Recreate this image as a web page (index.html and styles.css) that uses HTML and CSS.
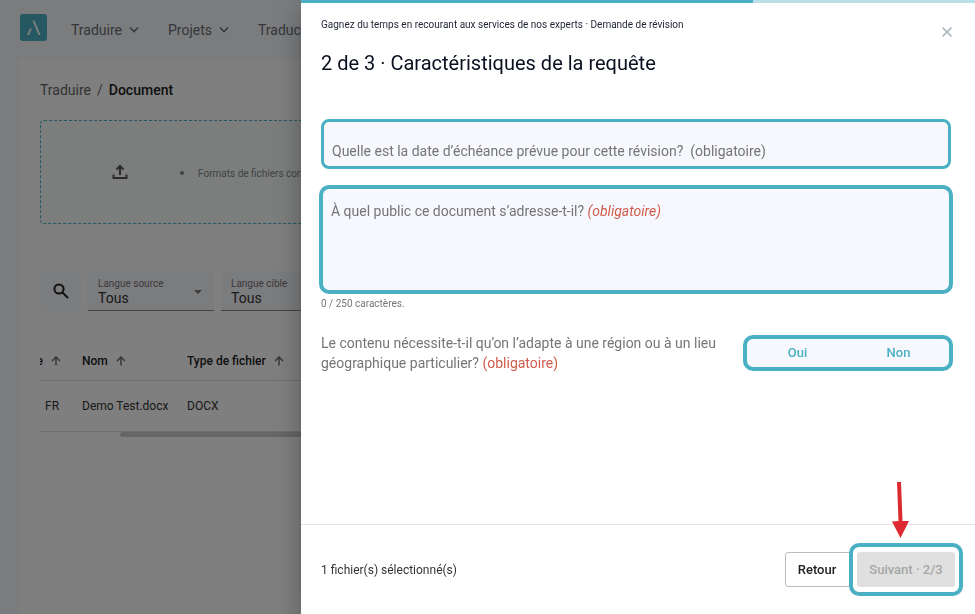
FILE: index.html
```html
<!DOCTYPE html>
<html lang="fr">
<head>
    <meta charset="UTF-8">
    <meta name="viewport" content="width=device-width, initial-scale=1.0">
    <title>Demande de révision</title>
    <link rel="stylesheet" href="styles.css">
</head>
<body>

    <header class="topbar">
        <svg class="logo" viewBox="0 0 27 27" aria-hidden="true">
            <rect width="27" height="27" rx="3" fill="#4bb0c3" stroke="none"/>
            <path d="M12.500 6.500H14.500L20.500 21H18.500ZM10 14.500H12L9 21H7Z" fill="#fff" stroke="none"/>
        </svg>
        <nav class="menu">
            <a href="#">Traduire
                <svg class="chevron" viewBox="0 0 10 10"><path d="M1 2.500L5 6.500L9 2.500"/></svg>
            </a>
            <a href="#">Projets
                <svg class="chevron" viewBox="0 0 10 10"><path d="M1 2.500L5 6.500L9 2.500"/></svg>
            </a>
            <a href="#">Traduction</a>
        </nav>
    </header>

    <main class="content">
        <div class="breadcrumb"><a href="#">Traduire</a><span>/</span><strong>Document</strong></div>

        <div class="dropzone">
            <svg class="upload" viewBox="0 0 16 16"><path d="M8 11V2.500M4.500 5.500L8 2L11.500 5.500M1.500 10.500V14H14.500V10.500"/></svg>
            <ul>
                <li>Formats de fichiers compatibles</li>
            </ul>
        </div>

        <div class="filters">
            <button class="search" aria-label="Rechercher">
                <svg viewBox="0 0 18 18"><circle cx="7" cy="7" r="4.600"/><path d="M10.500 10.500L16 16"/></svg>
            </button>
            <div class="filter">
                <label for="source">Langue source</label>
                <select id="source"><option>Tous</option></select>
                <svg class="caret" viewBox="0 0 8 4"><path d="M0 0H8L4 4Z"/></svg>
            </div>
            <div class="filter">
                <label for="target">Langue cible</label>
                <select id="target"><option>Tous</option></select>
                <svg class="caret" viewBox="0 0 8 4"><path d="M0 0H8L4 4Z"/></svg>
            </div>
        </div>

        <table class="files">
            <thead>
                <tr>
                    <th><div class="sort sort-cut">Cible <svg viewBox="0 0 10 10"><path d="M5 9.500V1M1 5L5 1L9 5"/></svg></div></th>
                    <th><div class="sort">Nom <svg viewBox="0 0 10 10"><path d="M5 9.500V1M1 5L5 1L9 5"/></svg></div></th>
                    <th><div class="sort">Type de fichier <svg viewBox="0 0 10 10"><path d="M5 9.500V1M1 5L5 1L9 5"/></svg></div></th>
                </tr>
            </thead>
            <tbody>
                <tr>
                    <td>FR</td>
                    <td>Demo Test.docx</td>
                    <td>DOCX</td>
                </tr>
            </tbody>
        </table>
        <div class="scrollbar"></div>
    </main>

    <div class="backdrop"></div>

    <section class="drawer" role="dialog" aria-labelledby="drawer-title">
        <div class="progress"><div class="progress-bar" style="width: 67%"></div></div>

        <div class="drawer-header">
            <div>
                <p class="subtitle">Gagnez du temps en recourant aux services de nos experts · Demande de révision</p>
                <h1 id="drawer-title">2 de 3 · Caractéristiques de la requête</h1>
            </div>
            <button class="close" aria-label="Fermer">
                <svg viewBox="0 0 10 10"><path d="M.5 .5L9.500 9.500M9.500 .5L.5 9.500"/></svg>
            </button>
        </div>

        <form class="drawer-body">
            <div class="field field-date">
                <label for="due">Quelle est la date d’échéance prévue pour cette révision?&nbsp; (obligatoire)</label>
                <input type="text" id="due">
            </div>

            <div class="field field-text">
                <label for="audience">À quel public ce document s’adresse-t-il? <em class="required">(obligatoire)</em></label>
                <textarea id="audience" maxlength="250"></textarea>
            </div>
            <p class="counter">0 / 250 caractères.</p>

            <div class="question">
                <p id="region-label">Le contenu nécessite-t-il qu’on l’adapte à une région ou à un lieu géographique particulier? <span class="required">(obligatoire)</span></p>
                <div class="toggle" role="radiogroup" aria-labelledby="region-label">
                    <input type="radio" name="region" id="yes"><label for="yes">Oui</label>
                    <input type="radio" name="region" id="no"><label for="no">Non</label>
                </div>
            </div>
        </form>

        <footer class="drawer-footer">
            <span class="selected">1 fichier(s) sélectionné(s)</span>
            <button class="btn btn-back">Retour</button>
            <div class="highlight">
                <svg class="arrow" viewBox="0 0 18 58"><path d="M6 1L10 1L11.500 40H18L9.500 57L1 40.500L7.500 40Z" fill="#dc2a30"/></svg>
                <button class="btn btn-next" disabled>Suivant · 2/3</button>
            </div>
        </footer>
    </section>

</body>
</html>
```
FILE: styles.css
```css
* {
    box-sizing: border-box;
}
body {
    margin: 0;
    height: 100vh;
    overflow: hidden;
    display: flex;
    flex-direction: column;
    font-family: Roboto, 'Liberation Sans', sans-serif;
    font-size: 14px;
    color: #333;
    background: #f6f8fd;
}
p, h1, ul {
    margin: 0;
    padding: 0;
}
a {
    color: inherit;
    text-decoration: none;
}
button, input, select, textarea {
    font: inherit;
    color: inherit;
}
svg {
    display: block;
    fill: none;
    stroke: currentColor;
    flex-shrink: 0;
}

/* page behind the drawer */
.topbar {
    display: flex;
    align-items: center;
    gap: 24px;
    height: 60px;
    padding: 0 20px 6px;
    flex-shrink: 0;
}
.logo {
    width: 27px;
    height: 27px;
}
.menu {
    display: flex;
    gap: 29px;
    padding-top: 6px;
    color: #6a6e73;
}
.menu a {
    display: flex;
    align-items: center;
    gap: 7px;
}
.chevron {
    width: 10px;
    height: 10px;
    stroke-width: 1.6;
}
.content {
    flex: 1;
    margin-left: 20px;
    padding: 20px;
    background: #fff;
    border-radius: 4px 0 0 0;
}
.breadcrumb {
    display: flex;
    gap: 6px;
    line-height: 20px;
    color: #666;
}
.breadcrumb strong {
    font-weight: 500;
    color: #222;
}
.dropzone {
    display: flex;
    align-items: center;
    gap: 70px;
    height: 104px;
    margin-top: 20px;
    padding-left: 71px;
    border: 1px dashed #4bb0c3;
    border-radius: 4px;
    background: #f8fdfb;
}
.upload {
    width: 16px;
    height: 16px;
    stroke: #555;
    stroke-width: 2;
}
.dropzone ul {
    padding-top: 2px;
    list-style: none;
}
.dropzone li {
    display: flex;
    align-items: center;
    gap: 14px;
    margin-left: -18px;
    font-size: 10px;
    color: #80858a;
}
.dropzone li::before {
    content: "";
    width: 4px;
    height: 4px;
    border-radius: 50%;
    background: #80858a;
}
.filters {
    display: flex;
    gap: 7px;
    margin-top: 47px;
}
.search {
    display: flex;
    align-items: center;
    justify-content: center;
    width: 41px;
    height: 40px;
    border: none;
    border-radius: 3px;
    background: #f6f8fd;
    color: #222;
}
.search svg {
    width: 18px;
    height: 18px;
    stroke-width: 2;
}
.filter {
    display: grid;
    grid-template-columns: 1fr 8px;
    align-content: end;
    align-items: center;
    width: 126px;
    height: 40px;
    padding: 0 12px 4px 10px;
    border-bottom: 1px solid #888;
    border-radius: 3px 3px 0 0;
    background: #f6f8fd;
}
.filter label {
    grid-column: 1;
    font-size: 10px;
    line-height: 12px;
    color: #777;
}
.filter select {
    grid-column: 1;
    width: 100%;
    height: 16px;
    padding: 0;
    border: none;
    background: none;
    appearance: none;
}
.caret {
    grid-column: 2;
    grid-row: 1 / 3;
    width: 8px;
    height: 4px;
    fill: #777;
    stroke: none;
}
.files {
    width: 100%;
    margin-top: 30px;
    border-collapse: collapse;
    table-layout: fixed;
    font-size: 12px;
}
.files th, .files td {
    padding: 0;
    border-bottom: 1px solid #ddd;
    text-align: left;
}
.files th {
    height: 39px;
    padding-top: 2px;
    font-weight: 500;
    color: #222;
}
.files td {
    height: 51px;
}
.files th:nth-child(1) {
    width: 42px;
}
.files td:nth-child(1) {
    padding-left: 5px;
}
.files th:nth-child(2) {
    width: 105px;
}
.sort {
    display: flex;
    align-items: center;
    gap: 8px;
}
.sort-cut {
    width: 21px;
    justify-content: flex-end;
    overflow: hidden;
}
.sort svg {
    width: 10px;
    height: 10px;
    stroke: #666;
    stroke-width: 1.4;
}
.scrollbar {
    height: 5px;
    margin-left: 80px;
    border-radius: 3px;
    background: #ccc;
}
.backdrop {
    position: fixed;
    inset: 0;
    background: rgba(0, 0, 0, 0.5);
}

/* drawer */
.drawer {
    position: fixed;
    top: 0;
    right: 0;
    bottom: 0;
    left: 301px;
    display: flex;
    flex-direction: column;
    background: #fff;
    box-shadow: 0 8px 10px -5px rgba(0, 0, 0, 0.2), 0 16px 24px 2px rgba(0, 0, 0, 0.14), 0 6px 30px 5px rgba(0, 0, 0, 0.12);
}
.progress {
    height: 3px;
    background: #b8e0e6;
}
.progress-bar {
    height: 3px;
    background: #4bb0c3;
}
.drawer-header {
    display: flex;
    justify-content: space-between;
    align-items: flex-start;
    padding: 14px 18px 0 20px;
}
.subtitle {
    font-size: 10px;
    line-height: 16px;
    color: #1d2333;
}
.drawer-header h1 {
    margin-top: 16px;
    font-size: 20px;
    line-height: 28px;
    font-weight: 400;
    color: #0b1020;
}
.close {
    display: flex;
    margin-top: 5px;
    padding: 5px;
    border: none;
    background: none;
    color: #a3b2b6;
}
.close svg {
    width: 10px;
    height: 10px;
    stroke-width: 1.5;
}
.drawer-body {
    flex: 1;
    padding: 42px 22px 0 18px;
    color: #757575;
}
.field {
    position: relative;
    background: #f6f8fd;
    border: 4px solid #4bb0c3;
    border-radius: 10px;
}
.field label {
    position: absolute;
    left: 8px;
    line-height: 20px;
    pointer-events: none;
}
.field input, .field textarea {
    display: block;
    width: 100%;
    border: none;
    outline: none;
    background: none;
    resize: none;
}
.field-date {
    margin: 0 2px;
    border-width: 3px;
    border-radius: 8px;
}
.field-date label {
    bottom: 5px;
}
.field-date input {
    height: 44px;
    padding: 18px 8px 0;
}
.field-text {
    margin-top: 16px;
}
.field-text label {
    top: 12px;
}
.field-text textarea {
    height: 101px;
    padding: 12px 8px;
}
.required {
    color: #cf5c4c;
}
.counter {
    margin: 2px 2px 0;
    font-size: 10px;
    line-height: 16px;
}
.question {
    display: flex;
    align-items: center;
    justify-content: space-between;
    margin-top: 21px;
    padding-left: 2px;
    line-height: 20px;
}
.question p {
    width: 400px;
}
.toggle {
    display: flex;
    width: 210px;
    height: 36px;
    border: 4px solid #4bb0c3;
    border-radius: 10px;
    background: #f6f8fd;
    font-size: 13px;
    font-weight: 500;
    line-height: 28px;
    text-align: center;
    color: #4bb0c3;
}
.toggle input {
    position: absolute;
    opacity: 0;
}
.toggle label {
    flex: 1;
}
.drawer-footer {
    display: flex;
    align-items: center;
    height: 90px;
    padding: 0 12px 0 20px;
    border-top: 1px solid #e4e4e4;
}
.selected {
    flex: 1;
    font-size: 12px;
}
.btn {
    height: 35px;
    border-radius: 3px;
    font-size: 13px;
    font-weight: 500;
}
.btn-back {
    width: 72px;
    padding: 0 8px 0 0;
    border: 1px solid #bbb;
    background: #fff;
    color: #222;
}
.highlight {
    position: relative;
    margin-left: -8px;
    padding: 5px 4px;
    border: 4px solid #4bb0c3;
    border-radius: 10px;
    background: #fff;
}
.btn-next {
    display: block;
    width: 98px;
    border: none;
    background: #e0e0e0;
    color: #a6a6a6;
}
.arrow {
    position: absolute;
    left: 38px;
    bottom: 53px;
    width: 18px;
    height: 58px;
    stroke: none;
}
```
